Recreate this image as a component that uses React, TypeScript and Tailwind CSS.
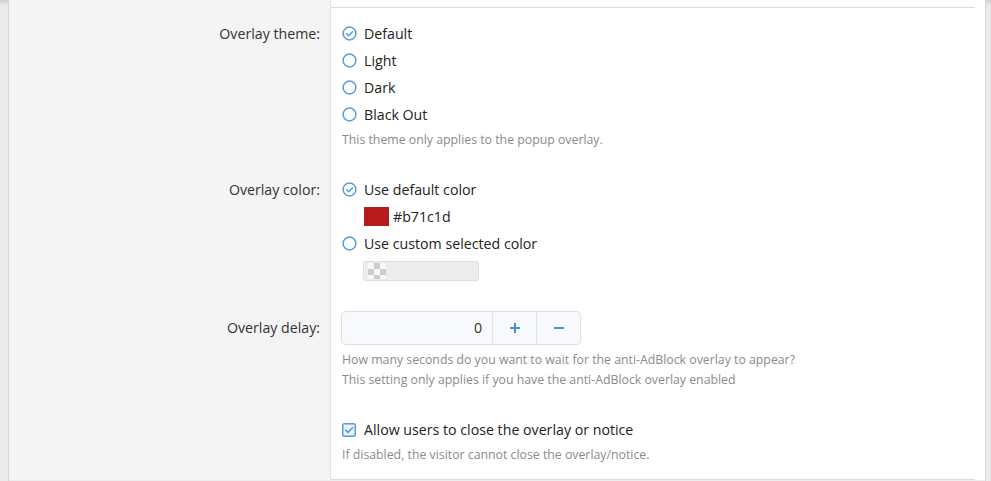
import React from "react";

const BLUE = "#5b9bd5";

function Radio({ checked }: { checked?: boolean }) {
  return (
    <svg width="15" height="15" viewBox="0 0 15 15" className="shrink-0">
      <circle cx="7.5" cy="7.5" r="6.4" fill="#fff" stroke={BLUE} strokeWidth="1.5" />
      {checked && (
        <path d="M4.6 7.7l2 2 3.9-4" fill="none" stroke={BLUE} strokeWidth="1.5" strokeLinecap="round" strokeLinejoin="round" />
      )}
    </svg>
  );
}

function Check() {
  return (
    <svg width="14" height="14" viewBox="0 0 14 14" className="shrink-0">
      <rect x="0.75" y="0.75" width="12.5" height="12.5" rx="1.5" fill="#eaf3fb" stroke={BLUE} strokeWidth="1.5" />
      <path d="M3.6 7.2l2.3 2.2 4.6-4.7" fill="none" stroke={BLUE} strokeWidth="1.6" strokeLinecap="round" strokeLinejoin="round" />
    </svg>
  );
}

function Option({ label, checked }: { label: string; checked?: boolean }) {
  return (
    <div className="flex h-[27px] items-center gap-[7px]">
      <Radio checked={checked} />
      <span>{label}</span>
    </div>
  );
}

function Hint({ children, className }: { children: React.ReactNode; className?: string }) {
  return <div className={"text-[12.3px] text-[#8b8b8b] " + (className ?? "")}>{children}</div>;
}

function Row({
  label,
  labelClass,
  children,
  className,
}: {
  label?: string;
  labelClass?: string;
  children?: React.ReactNode;
  className?: string;
}) {
  return (
    <div className="flex">
      <div className={"w-[322px] shrink-0 border-r border-[#e3e3e3] bg-[#f4f4f4] pr-[10px] text-right text-[#333] " + (className ?? "")}>
        {label && <div className={labelClass}>{label}</div>}
      </div>
      <div className={"flex-1 bg-white pr-[10px] pl-[11px] " + (className ?? "")}>{children}</div>
    </div>
  );
}

function Line() {
  return (
    <div className="flex">
      <div className="h-[1px] w-[322px] shrink-0 border-r border-[#e3e3e3] bg-[#f4f4f4]" />
      <div className="flex-1 bg-white pr-[10px]">
        <div className="h-[1px] bg-[#dadada]" />
      </div>
    </div>
  );
}

export default function App() {
  return (
    <div
      className="flex h-[481px] w-[991px] overflow-hidden bg-[#ececec] text-[14.2px] text-[#222] shadow-[inset_0_5px_5px_-3px_rgba(0,0,0,0.16)]"
      style={{ fontFamily: '"Open Sans", "Noto Sans", sans-serif' }}
    >
      <div className="w-[9px] shrink-0 border-r border-[#d5d5d5]" />
      <div className="flex flex-1 flex-col">
        <Row className="h-[7px]" />
        <Line />

        <Row label="Overlay theme:" labelClass="leading-[27px]" className="pt-[12px] pb-[15px]">
          <Option label="Default" checked />
          <Option label="Light" />
          <Option label="Dark" />
          <Option label="Black Out" />
          <Hint className="mt-[3px] leading-[18px]">This theme only applies to the popup overlay.</Hint>
        </Row>

        <Row label="Overlay color:" labelClass="leading-[27px]" className="pt-[12px] pb-[14px]">
          <Option label="Use default color" checked />
          <div className="flex h-[27px] items-center gap-[4px] pl-[22px]">
            <span className="h-[19px] w-[25px] bg-[#b71c1d]" />
            <span>#b71c1d</span>
          </div>
          <Option label="Use custom selected color" />
          <div className="mt-[4px] ml-[21px] flex h-[20px] w-[116px] items-center rounded-[3px] border border-[#dddddd] bg-[#ededed] pl-[4px]">
            <span className="h-[16px] w-[18px] bg-[repeating-conic-gradient(#cdcdcd_0_25%,#f8f8f8_0_50%)] bg-[length:12px_12px]" />
          </div>
        </Row>

        <Row label="Overlay delay:" labelClass="leading-[34px]" className="pt-[16px]">
          <div className="-ml-[1px] flex h-[34px] w-[240px] overflow-hidden rounded-[4px] border border-[#d9dee4] bg-[#f7f9fc]">
            <div className="flex flex-1 items-center justify-end pr-[10px] text-[#333]">0</div>
            <div className="flex w-[44px] items-center justify-center border-l border-[#e1e5ea]">
              <svg width="12" height="12" viewBox="0 0 12 12">
                <path d="M6 1v10M1 6h10" stroke="#4a90d9" strokeWidth="2" />
              </svg>
            </div>
            <div className="flex w-[44px] items-center justify-center border-l border-[#e1e5ea]">
              <svg width="12" height="12" viewBox="0 0 12 12">
                <path d="M1 6h10" stroke="#4a90d9" strokeWidth="2" />
              </svg>
            </div>
          </div>
          <Hint className="mt-[5px] leading-[20px]">
            How many seconds do you want to wait for the anti-AdBlock overlay to appear?
            <br />
            This setting only applies if you have the anti-AdBlock overlay enabled
          </Hint>
        </Row>

        <Row className="pt-[26px] pb-[15px]">
          <div className="flex h-[27px] items-center gap-[8px]">
            <Check />
            <span>Allow users to close the overlay or notice</span>
          </div>
          <Hint className="mt-[3px] leading-[18px]">If disabled, the visitor cannot close the overlay/notice.</Hint>
        </Row>

        <Line />
        <Row className="flex-1" />
      </div>
      <div className="w-[6px] shrink-0 border-l border-[#d8d8d8]" />
    </div>
  );
}
